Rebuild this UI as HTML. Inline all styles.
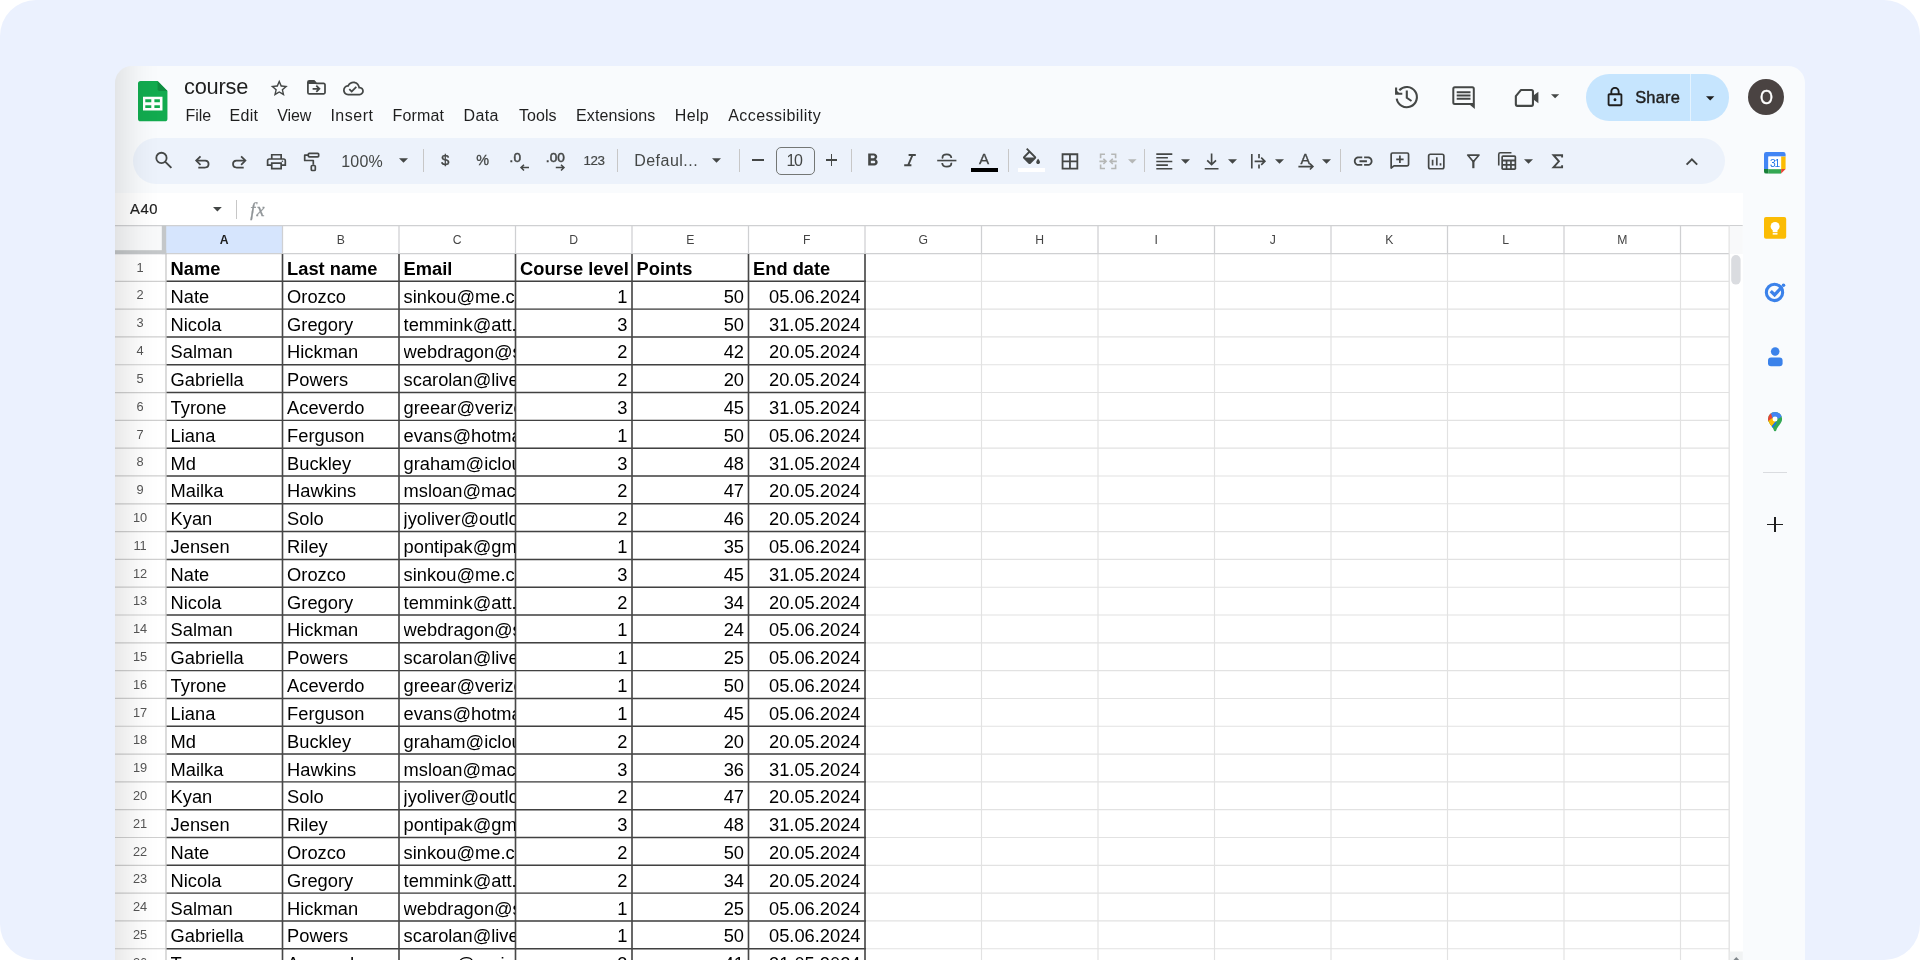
<!DOCTYPE html>
<html lang="en"><head><meta charset="utf-8"><title>course - Google Sheets</title>
<style>
html,body{margin:0;padding:0;background:#fff;}
body{width:1920px;height:960px;overflow:hidden;position:relative;font-family:"Liberation Sans", Arial, sans-serif;color:#1f1f1f;}
.outer{position:absolute;left:0;top:0;width:1920px;height:960px;background:#ebf1fe;border-radius:36px;overflow:hidden;will-change:transform;}
.win{position:absolute;left:115px;top:66px;width:1690px;height:900px;background:#f9fbfd;border-radius:17px 17px 0 0;}
.abs,.outer span,.ic{position:absolute;white-space:nowrap;}
.ic{display:block;overflow:visible;}
.menu span{color:#1f1f1f;}
.tb{position:absolute;left:133px;top:138px;width:1591.5px;height:46px;border-radius:23px;background:#ecf2fb;}
.sep{position:absolute;width:1px;top:149px;height:23px;background:#c7c7c7;}
.g{fill:#444746;}
.sheet{position:absolute;left:115px;top:193px;width:1627.5px;height:767px;background:#fff;overflow:hidden;}
.cells span{color:#000;}
.c{position:absolute;overflow:hidden;white-space:nowrap;color:#000;font-size:18.3px;line-height:28px;height:28px;}
.rn{position:absolute;width:50px;text-align:center;color:#565656;font-size:12.8px;line-height:14px;left:115.1px;}
.ch{position:absolute;width:116.5px;text-align:center;color:#454545;font-size:12.2px;line-height:14px;top:232.6px;}
</style></head>
<body>
<div class="outer">
<div class="win"></div>
<svg class="ic" style="left:138.30px;top:80.50px;" width="29.45" height="40.30" viewBox="0 0 29.450 40.300">
<path d="M2.6 0H19.6L29.45 9.9V37.7a2.600 2.600 0 0 1-2.600 2.600H2.600A2.600 2.600 0 0 1 0 37.700V2.600A2.600 2.600 0 0 1 2.600 0z" fill="#12ab4f"/>
<path d="M19.600 0L29.450 9.900H21.300a1.700 1.700 0 0 1-1.700-1.700z" fill="#0e8d40"/>
<path d="M5 15.850h19.500v13.550H5z M7.300 18.350v2.950h6v-2.950z M16.400 18.350v2.950h5.500v-2.950z M7.300 24.200v2.700h6v-2.700z M16.400 24.200v2.700h5.500v-2.700z" fill="#fff" fill-rule="evenodd"/>
</svg><span style="left:184.10px;top:73.95px;font-size:21.8px;line-height:26px;color:#1f1f1f;letter-spacing:-0.25px;">course</span><svg class="ic" style="left:269.20px;top:77.97px;" width="20.50" height="20.50" viewBox="0 0 24 24"><path class="g" d="M22 9.24l-7.19-.62L12 2 9.19 8.63 2 9.24l5.46 4.73L5.82 21 12 17.27 18.18 21l-1.63-7.03L22 9.24zM12 15.4l-3.76 2.27 1-4.28-3.32-2.88 4.38-.38L12 6.1l1.71 4.04 4.38.38-3.32 2.88 1 4.28L12 15.4z"/></svg><svg class="ic" style="left:343.10px;top:77.60px;" width="20.90" height="20.90" viewBox="0 0 24 24"><path class="g" d="M19.35 10.04C18.67 6.59 15.64 4 12 4 9.11 4 6.6 5.64 5.35 8.04 2.34 8.36 0 10.91 0 14c0 3.31 2.69 6 6 6h13c2.76 0 5-2.24 5-5 0-2.64-2.05-4.78-4.65-4.96zM19 18H6c-2.21 0-4-1.79-4-4 0-2.05 1.53-3.76 3.56-3.97l1.07-.11.5-.95C8.08 7.14 9.94 6 12 6c2.62 0 4.88 1.86 5.39 4.43l.3 1.5 1.53.11c1.56.1 2.78 1.41 2.78 2.96 0 1.65-1.35 3-3 3zm-9-3.82l-2.09-2.09L6.5 13.5 10 17l6.01-6.01-1.41-1.41z"/></svg><div class="menu"><span class="m_File" style="left:185.40px;top:106.36px;font-size:16px;line-height:19px;">File</span><span class="m_Edit" style="left:229.50px;top:106.36px;font-size:16px;line-height:19px;letter-spacing:0.33px;">Edit</span><span class="m_View" style="left:277.30px;top:106.36px;font-size:16px;line-height:19px;letter-spacing:-0.1px;">View</span><span class="m_Insert" style="left:330.40px;top:106.36px;font-size:16px;line-height:19px;letter-spacing:0.5px;">Insert</span><span class="m_Format" style="left:392.60px;top:106.36px;font-size:16px;line-height:19px;letter-spacing:0.12px;">Format</span><span class="m_Data" style="left:463.50px;top:106.36px;font-size:16px;line-height:19px;letter-spacing:0.4px;">Data</span><span class="m_Tools" style="left:519.10px;top:106.36px;font-size:16px;line-height:19px;">Tools</span><span class="m_Extensions" style="left:576.00px;top:106.36px;font-size:16px;line-height:19px;letter-spacing:0.11px;">Extensions</span><span class="m_Help" style="left:674.80px;top:106.36px;font-size:16px;line-height:19px;letter-spacing:0.33px;">Help</span><span class="m_Accessibility" style="left:728.20px;top:106.36px;font-size:16px;line-height:19px;letter-spacing:0.45px;">Accessibility</span></div>
<svg class="ic" style="left:1551.00px;top:94.30px;" width="8.20" height="4.50" viewBox="0 0 10 5"><path class="g" d="M0 0h10L5 5z"/></svg><div class="abs" style="left:1585.5px;top:74.3px;width:143px;height:46.4px;border-radius:23.2px;background:#c6e5fe;"></div><div class="abs" style="left:1689.8px;top:74.3px;width:1.2px;height:46.4px;background:#e4f3ff;"></div><svg class="ic" style="left:1603.80px;top:85.50px;" width="22.00" height="22.00" viewBox="0 0 24 24"><path fill="#1f1f1f" d="M18 8h-1V6c0-2.76-2.24-5-5-5S7 3.240 7 6v2H6c-1.1 0-2 .9-2 2v10c0 1.100.9 2 2 2h12c1.100 0 2-.9 2-2V10c0-1.1-.9-2-2-2zM9 6c0-1.660 1.340-3 3-3s3 1.340 3 3v2H9V6zm9 14H6V10h12v10zm-6-3.400c.880 0 1.600-.720 1.600-1.600s-.720-1.600-1.600-1.600-1.600.720-1.600 1.600.720 1.600 1.600 1.600z"/></svg><span class="share" style="left:1635.20px;top:86.82px;font-size:16.4px;line-height:20px;color:#1f1f1f;-webkit-text-stroke:0.45px #1f1f1f;letter-spacing:0.25px;">Share</span><svg class="ic" style="left:1705.60px;top:95.60px;" width="8.40" height="4.60" viewBox="0 0 10 5"><path fill="#1f1f1f" d="M0 0h10L5 5z"/></svg><div class="abs" style="left:1747.6px;top:78.7px;width:36.8px;height:36.8px;border-radius:50%;background:#4a4342;"></div><span class="av" style="left:1759.50px;top:86.28px;font-size:19.4px;line-height:23px;color:#fff;-webkit-text-stroke:0.35px #fff;transform:scaleX(0.86);transform-origin:0 0;">O</span>
<div class="tb"></div>
<div class="sep" style="left:423.3px"></div><div class="sep" style="left:617px"></div><div class="sep" style="left:738.8px"></div><div class="sep" style="left:850.8px"></div><div class="sep" style="left:1007.8px"></div><div class="sep" style="left:1143.8px"></div><div class="sep" style="left:1340px"></div>
<span class="zoom" style="left:341.30px;top:151.66px;font-size:16px;line-height:19px;color:#444746;letter-spacing:0.15px;">100%</span><svg class="ic" style="left:399.10px;top:158.20px;" width="9.00" height="4.80" viewBox="0 0 10 5"><path fill="#444746" d="M0 0h10L5 5z"/></svg><span class="dollar" style="left:441.20px;top:151.34px;font-size:14.6px;line-height:18px;color:#444746;-webkit-text-stroke:0.4px #444746;">$</span><span class="pct" style="left:476.20px;top:152.11px;font-size:14.4px;line-height:17px;color:#444746;-webkit-text-stroke:0.3px #444746;">%</span><span class="dec0" style="left:509.40px;top:150.19px;font-size:13.6px;line-height:16px;color:#444746;-webkit-text-stroke:0.5px #444746;letter-spacing:0.3px;">.0</span><span class="dec00" style="left:545.80px;top:150.19px;font-size:13.6px;line-height:16px;color:#444746;-webkit-text-stroke:0.5px #444746;letter-spacing:0.1px;">.00</span><span class="n123" style="left:583.40px;top:152.66px;font-size:13.4px;line-height:16px;color:#444746;-webkit-text-stroke:0.2px #444746;letter-spacing:-0.35px;">123</span><span class="deff" style="left:634.20px;top:150.66px;font-size:16px;line-height:19px;color:#444746;letter-spacing:0.48px;">Defaul...</span><svg class="ic" style="left:712.40px;top:158.20px;" width="9.00" height="4.80" viewBox="0 0 10 5"><path fill="#444746" d="M0 0h10L5 5z"/></svg><div class="abs" style="left:752px;top:159.2px;width:11.8px;height:1.7px;background:#444746;"></div><div class="abs" style="left:776px;top:147px;width:37.2px;height:26px;border:1px solid #747775;border-radius:5px;"></div><span class="fs10" style="left:786.40px;top:150.66px;font-size:16px;line-height:19px;color:#444746;letter-spacing:-1.2px;">10</span><div class="abs" style="left:825.6px;top:159.4px;width:11.8px;height:1.7px;background:#444746;"></div><div class="abs" style="left:830.6px;top:154.4px;width:1.7px;height:11.8px;background:#444746;"></div><svg class="ic" style="left:862.30px;top:150.10px;" width="21.20" height="20.60" viewBox="0 0 24 24" preserveAspectRatio="none"><path class="g" d="M15.6 10.790c.970-.670 1.650-1.770 1.650-2.790 0-2.260-1.750-4-4-4H7v14h7.040c2.090 0 3.710-1.700 3.710-3.790 0-1.520-.860-2.820-2.150-3.420zM10 6.500h3c.830 0 1.500.670 1.500 1.500s-.670 1.500-1.500 1.500h-3v-3zm3.500 9H10v-3h3.500c.830 0 1.500.670 1.500 1.500s-.670 1.500-1.500 1.500z"/></svg><span class="tca" style="left:979.10px;top:149.63px;font-size:15.2px;line-height:18px;color:#444746;-webkit-text-stroke:0.3px #444746;">A</span><div class="abs" style="left:971.4px;top:167.9px;width:26.4px;height:3.8px;background:#000;"></div><svg class="ic" style="left:1021.50px;top:147.80px;" width="19.00" height="17.00" viewBox="2 0 20 18"><path class="g" d="M16.560 8.940L7.620 0 6.210 1.410l2.380 2.380-5.150 5.150c-.590.590-.590 1.540 0 2.120l5.500 5.500c.290.290.680.440 1.060.440s.770-.150 1.060-.440l5.500-5.500c.590-.580.590-1.530 0-2.120zM5.210 10L10 5.210 14.790 10H5.210zM19 11.500s-2 2.170-2 3.500c0 1.100.9 2 2 2s2-.9 2-2c0-1.330-2-3.500-2-3.500z"/></svg><div class="abs" style="left:1018.2px;top:167.900px;width:26.8px;height:3.8px;background:#fff;"></div><svg class="ic" style="left:1128.20px;top:158.50px;" width="8.60" height="4.60" viewBox="0 0 10 5"><path fill="#b5b7b6" d="M0 0h10L5 5z"/></svg><svg class="ic" style="left:1181.10px;top:158.50px;" width="9.00" height="4.80" viewBox="0 0 10 5"><path fill="#444746" d="M0 0h10L5 5z"/></svg><svg class="ic" style="left:1227.70px;top:158.50px;" width="9.00" height="4.80" viewBox="0 0 10 5"><path fill="#444746" d="M0 0h10L5 5z"/></svg><svg class="ic" style="left:1274.90px;top:158.50px;" width="9.00" height="4.80" viewBox="0 0 10 5"><path fill="#444746" d="M0 0h10L5 5z"/></svg><span class="rota" style="left:1300.40px;top:150.61px;font-size:14.4px;line-height:17px;color:#444746;-webkit-text-stroke:0.35px #444746;">A</span><svg class="ic" style="left:1322.20px;top:158.50px;" width="9.00" height="4.80" viewBox="0 0 10 5"><path fill="#444746" d="M0 0h10L5 5z"/></svg><svg class="ic" style="left:1351.60px;top:150.00px;" width="22.40" height="22.40" viewBox="0 0 24 24"><path class="g" d="M3.900 12c0-1.710 1.390-3.100 3.100-3.100h4V7H7c-2.760 0-5 2.240-5 5s2.240 5 5 5h4v-1.900H7c-1.710 0-3.100-1.390-3.100-3.100zM8 13h8v-2H8v2zm9-6h-4v1.900h4c1.710 0 3.100 1.390 3.100 3.100s-1.390 3.100-3.100 3.100h-4V17h4c2.760 0 5-2.240 5-5s-2.240-5-5-5z"/></svg><svg class="ic" style="left:1524.00px;top:158.50px;" width="9.00" height="4.80" viewBox="0 0 10 5"><path fill="#444746" d="M0 0h10L5 5z"/></svg>
<div class="sheet"></div>
<span class="namebox" style="left:130.00px;top:199.57px;font-size:14.8px;line-height:18px;color:#1f1f1f;letter-spacing:0.55px;-webkit-text-stroke:0.2px #1f1f1f;">A40</span><svg class="ic" style="left:213.40px;top:207.20px;" width="8.80" height="4.60" viewBox="0 0 10 5"><path fill="#444746" d="M0 0h10L5 5z"/></svg><div class="abs" style="left:236px;top:200px;width:1px;height:19px;background:#c7c7c7;"></div><span class="fx" style="left:250.2px;top:198.4px;font-family:'Liberation Serif',serif;font-style:italic;font-size:18.2px;line-height:24px;color:#8f9497;letter-spacing:1.2px;-webkit-text-stroke:0.3px #8f9497;">fx</span>
<svg class="ic" style="left:0;top:0" width="1920" height="960" viewBox="0 0 1920 960"><rect x="115" y="225.6" width="1627.7" height="27.900000000000006" fill="#fff"/><rect x="115" y="225.6" width="51.0" height="27.900000000000006" fill="#f8f9fa"/><rect x="166.0" y="225.6" width="117.0" height="27.900000000000006" fill="#d6e5fd"/><path d="M166.0 281.30H1729.2 M166.0 309.11H1729.2 M166.0 336.92H1729.2 M166.0 364.73H1729.2 M166.0 392.54H1729.2 M166.0 420.35H1729.2 M166.0 448.16H1729.2 M166.0 475.97H1729.2 M166.0 503.78H1729.2 M166.0 531.59H1729.2 M166.0 559.40H1729.2 M166.0 587.21H1729.2 M166.0 615.02H1729.2 M166.0 642.83H1729.2 M166.0 670.64H1729.2 M166.0 698.45H1729.2 M166.0 726.26H1729.2 M166.0 754.07H1729.2 M166.0 781.88H1729.2 M166.0 809.69H1729.2 M166.0 837.50H1729.2 M166.0 865.31H1729.2 M166.0 893.12H1729.2 M166.0 920.93H1729.2 M166.0 948.74H1729.2 M166.0 976.55H1729.2 M282.50 253.5V960 M399.00 253.5V960 M515.50 253.5V960 M632.00 253.5V960 M748.50 253.5V960 M865.00 253.5V960 M981.50 253.5V960 M1098.00 253.5V960 M1214.50 253.5V960 M1331.00 253.5V960 M1447.50 253.5V960 M1564.00 253.5V960 M1680.50 253.5V960" stroke="#e2e2e2" stroke-width="1.15" fill="none"/><path d="M115 225.6H1742.7 M115 253.5H1729.2 M282.50 225.6V253.5 M399.00 225.6V253.5 M515.50 225.6V253.5 M632.00 225.6V253.5 M748.50 225.6V253.5 M865.00 225.6V253.5 M981.50 225.6V253.5 M1098.00 225.6V253.5 M1214.50 225.6V253.5 M1331.00 225.6V253.5 M1447.50 225.6V253.5 M1564.00 225.6V253.5 M1680.50 225.6V253.5" stroke="#cfd0d2" stroke-width="1.25" fill="none"/><path d="M115 281.30H166.0 M115 309.11H166.0 M115 336.92H166.0 M115 364.73H166.0 M115 392.54H166.0 M115 420.35H166.0 M115 448.16H166.0 M115 475.97H166.0 M115 503.78H166.0 M115 531.59H166.0 M115 559.40H166.0 M115 587.21H166.0 M115 615.02H166.0 M115 642.83H166.0 M115 670.64H166.0 M115 698.45H166.0 M115 726.26H166.0 M115 754.07H166.0 M115 781.88H166.0 M115 809.69H166.0 M115 837.50H166.0 M115 865.31H166.0 M115 893.12H166.0 M115 920.93H166.0 M115 948.74H166.0 M115 976.55H166.0" stroke="#cfcfcf" stroke-width="1.2" fill="none"/><path d="M166.0 253.5V960" stroke="#c4c4c4" stroke-width="1.2" fill="none"/><path d="M1729.2 225.6V960" stroke="#e1e1e1" stroke-width="1.3" fill="none"/><rect x="1729.8" y="226.2" width="13" height="27.900000000000006" fill="#f8f9fa"/><rect x="1731.2" y="255" width="9.4" height="29.6" rx="4.7" fill="#dadce0"/><rect x="1729.8" y="951.5" width="13" height="9" fill="#f1f3f4"/><path d="M1733.5 960l2.800-3 2.800 3z" fill="#80868b"/><path d="M166.6 281.30H865.90 M166.6 309.11H865.90 M166.6 336.92H865.90 M166.6 364.73H865.90 M166.6 392.54H865.90 M166.6 420.35H865.90 M166.6 448.16H865.90 M166.6 475.97H865.90 M166.6 503.78H865.90 M166.6 531.59H865.90 M166.6 559.40H865.90 M166.6 587.21H865.90 M166.6 615.02H865.90 M166.6 642.83H865.90 M166.6 670.64H865.90 M166.6 698.45H865.90 M166.6 726.26H865.90 M166.6 754.07H865.90 M166.6 781.88H865.90 M166.6 809.69H865.90 M166.6 837.50H865.90 M166.6 865.31H865.90 M166.6 893.12H865.90 M166.6 920.93H865.90 M166.6 948.74H865.90 M166.6 976.55H865.90" stroke="#414141" stroke-width="1.45" fill="none"/><path d="M282.50 254.1V960 M399.00 254.1V960 M515.50 254.1V960 M632.00 254.1V960 M748.50 254.1V960 M865.00 254.1V960" stroke="#474747" stroke-width="1.6" fill="none"/><rect x="161.8" y="225.6" width="4.4" height="28.500000000000007" fill="#c4c7c9"/><rect x="115" y="250.2" width="51.2" height="3.9" fill="#c4c7c9"/></svg>
<div class="ch" style="left:166.00px;font-weight:bold;color:#1f1f1f;">A</div><div class="ch" style="left:282.50px;">B</div><div class="ch" style="left:399.00px;">C</div><div class="ch" style="left:515.50px;">D</div><div class="ch" style="left:632.00px;">E</div><div class="ch" style="left:748.50px;">F</div><div class="ch" style="left:865.00px;">G</div><div class="ch" style="left:981.50px;">H</div><div class="ch" style="left:1098.00px;">I</div><div class="ch" style="left:1214.50px;">J</div><div class="ch" style="left:1331.00px;">K</div><div class="ch" style="left:1447.50px;">L</div><div class="ch" style="left:1564.00px;">M</div>
<div class="cells">
<div class="rn" style="top:260.64px">1</div><div class="c" style="top:254.96px;left:170.60px;width:111.00px;font-weight:bold;">Name</div><div class="c" style="top:254.96px;left:287.10px;width:111.00px;font-weight:bold;">Last name</div><div class="c" style="top:254.96px;left:403.60px;width:111.00px;font-weight:bold;">Email</div><div class="c" style="top:254.96px;left:520.10px;width:111.00px;font-weight:bold;">Course level</div><div class="c" style="top:254.96px;left:636.60px;width:111.00px;font-weight:bold;">Points</div><div class="c" style="top:254.96px;left:753.10px;width:111.00px;font-weight:bold;">End date</div>
<div class="rn" style="top:288.45px">2</div><div class="c" style="top:282.77px;left:170.60px;width:111.00px;">Nate</div><div class="c" style="top:282.77px;left:287.10px;width:111.00px;">Orozco</div><div class="c" style="top:282.77px;left:403.60px;width:111.00px;">sinkou@me.com</div><div class="c" style="top:282.77px;left:515.50px;width:112.00px;text-align:right;">1</div><div class="c" style="top:282.77px;left:632.00px;width:112.00px;text-align:right;">50</div><div class="c" style="top:282.77px;left:748.50px;width:112.00px;text-align:right;">05.06.2024</div>
<div class="rn" style="top:316.26px">3</div><div class="c" style="top:310.58px;left:170.60px;width:111.00px;">Nicola</div><div class="c" style="top:310.58px;left:287.10px;width:111.00px;">Gregory</div><div class="c" style="top:310.58px;left:403.60px;width:111.00px;">temmink@att.net</div><div class="c" style="top:310.58px;left:515.50px;width:112.00px;text-align:right;">3</div><div class="c" style="top:310.58px;left:632.00px;width:112.00px;text-align:right;">50</div><div class="c" style="top:310.58px;left:748.50px;width:112.00px;text-align:right;">31.05.2024</div>
<div class="rn" style="top:344.07px">4</div><div class="c" style="top:338.39px;left:170.60px;width:111.00px;">Salman</div><div class="c" style="top:338.39px;left:287.10px;width:111.00px;">Hickman</div><div class="c" style="top:338.39px;left:403.60px;width:111.00px;">webdragon@sbcglobal.net</div><div class="c" style="top:338.39px;left:515.50px;width:112.00px;text-align:right;">2</div><div class="c" style="top:338.39px;left:632.00px;width:112.00px;text-align:right;">42</div><div class="c" style="top:338.39px;left:748.50px;width:112.00px;text-align:right;">20.05.2024</div>
<div class="rn" style="top:371.88px">5</div><div class="c" style="top:366.20px;left:170.60px;width:111.00px;">Gabriella</div><div class="c" style="top:366.20px;left:287.10px;width:111.00px;">Powers</div><div class="c" style="top:366.20px;left:403.60px;width:111.00px;">scarolan@live.com</div><div class="c" style="top:366.20px;left:515.50px;width:112.00px;text-align:right;">2</div><div class="c" style="top:366.20px;left:632.00px;width:112.00px;text-align:right;">20</div><div class="c" style="top:366.20px;left:748.50px;width:112.00px;text-align:right;">20.05.2024</div>
<div class="rn" style="top:399.69px">6</div><div class="c" style="top:394.01px;left:170.60px;width:111.00px;">Tyrone</div><div class="c" style="top:394.01px;left:287.10px;width:111.00px;">Aceverdo</div><div class="c" style="top:394.01px;left:403.60px;width:111.00px;">greear@verizon.net</div><div class="c" style="top:394.01px;left:515.50px;width:112.00px;text-align:right;">3</div><div class="c" style="top:394.01px;left:632.00px;width:112.00px;text-align:right;">45</div><div class="c" style="top:394.01px;left:748.50px;width:112.00px;text-align:right;">31.05.2024</div>
<div class="rn" style="top:427.50px">7</div><div class="c" style="top:421.82px;left:170.60px;width:111.00px;">Liana</div><div class="c" style="top:421.82px;left:287.10px;width:111.00px;">Ferguson</div><div class="c" style="top:421.82px;left:403.60px;width:111.00px;">evans@hotmail.com</div><div class="c" style="top:421.82px;left:515.50px;width:112.00px;text-align:right;">1</div><div class="c" style="top:421.82px;left:632.00px;width:112.00px;text-align:right;">50</div><div class="c" style="top:421.82px;left:748.50px;width:112.00px;text-align:right;">05.06.2024</div>
<div class="rn" style="top:455.31px">8</div><div class="c" style="top:449.63px;left:170.60px;width:111.00px;">Md</div><div class="c" style="top:449.63px;left:287.10px;width:111.00px;">Buckley</div><div class="c" style="top:449.63px;left:403.60px;width:111.00px;">graham@icloud.com</div><div class="c" style="top:449.63px;left:515.50px;width:112.00px;text-align:right;">3</div><div class="c" style="top:449.63px;left:632.00px;width:112.00px;text-align:right;">48</div><div class="c" style="top:449.63px;left:748.50px;width:112.00px;text-align:right;">31.05.2024</div>
<div class="rn" style="top:483.12px">9</div><div class="c" style="top:477.44px;left:170.60px;width:111.00px;">Mailka</div><div class="c" style="top:477.44px;left:287.10px;width:111.00px;">Hawkins</div><div class="c" style="top:477.44px;left:403.60px;width:111.00px;">msloan@mac.com</div><div class="c" style="top:477.44px;left:515.50px;width:112.00px;text-align:right;">2</div><div class="c" style="top:477.44px;left:632.00px;width:112.00px;text-align:right;">47</div><div class="c" style="top:477.44px;left:748.50px;width:112.00px;text-align:right;">20.05.2024</div>
<div class="rn" style="top:510.94px">10</div><div class="c" style="top:505.25px;left:170.60px;width:111.00px;">Kyan</div><div class="c" style="top:505.25px;left:287.10px;width:111.00px;">Solo</div><div class="c" style="top:505.25px;left:403.60px;width:111.00px;">jyoliver@outlook.com</div><div class="c" style="top:505.25px;left:515.50px;width:112.00px;text-align:right;">2</div><div class="c" style="top:505.25px;left:632.00px;width:112.00px;text-align:right;">46</div><div class="c" style="top:505.25px;left:748.50px;width:112.00px;text-align:right;">20.05.2024</div>
<div class="rn" style="top:538.75px">11</div><div class="c" style="top:533.06px;left:170.60px;width:111.00px;">Jensen</div><div class="c" style="top:533.06px;left:287.10px;width:111.00px;">Riley</div><div class="c" style="top:533.06px;left:403.60px;width:111.00px;">pontipak@gmail.com</div><div class="c" style="top:533.06px;left:515.50px;width:112.00px;text-align:right;">1</div><div class="c" style="top:533.06px;left:632.00px;width:112.00px;text-align:right;">35</div><div class="c" style="top:533.06px;left:748.50px;width:112.00px;text-align:right;">05.06.2024</div>
<div class="rn" style="top:566.56px">12</div><div class="c" style="top:560.87px;left:170.60px;width:111.00px;">Nate</div><div class="c" style="top:560.87px;left:287.10px;width:111.00px;">Orozco</div><div class="c" style="top:560.87px;left:403.60px;width:111.00px;">sinkou@me.com</div><div class="c" style="top:560.87px;left:515.50px;width:112.00px;text-align:right;">3</div><div class="c" style="top:560.87px;left:632.00px;width:112.00px;text-align:right;">45</div><div class="c" style="top:560.87px;left:748.50px;width:112.00px;text-align:right;">31.05.2024</div>
<div class="rn" style="top:594.37px">13</div><div class="c" style="top:588.68px;left:170.60px;width:111.00px;">Nicola</div><div class="c" style="top:588.68px;left:287.10px;width:111.00px;">Gregory</div><div class="c" style="top:588.68px;left:403.60px;width:111.00px;">temmink@att.net</div><div class="c" style="top:588.68px;left:515.50px;width:112.00px;text-align:right;">2</div><div class="c" style="top:588.68px;left:632.00px;width:112.00px;text-align:right;">34</div><div class="c" style="top:588.68px;left:748.50px;width:112.00px;text-align:right;">20.05.2024</div>
<div class="rn" style="top:622.17px">14</div><div class="c" style="top:616.49px;left:170.60px;width:111.00px;">Salman</div><div class="c" style="top:616.49px;left:287.10px;width:111.00px;">Hickman</div><div class="c" style="top:616.49px;left:403.60px;width:111.00px;">webdragon@sbcglobal.net</div><div class="c" style="top:616.49px;left:515.50px;width:112.00px;text-align:right;">1</div><div class="c" style="top:616.49px;left:632.00px;width:112.00px;text-align:right;">24</div><div class="c" style="top:616.49px;left:748.50px;width:112.00px;text-align:right;">05.06.2024</div>
<div class="rn" style="top:649.99px">15</div><div class="c" style="top:644.30px;left:170.60px;width:111.00px;">Gabriella</div><div class="c" style="top:644.30px;left:287.10px;width:111.00px;">Powers</div><div class="c" style="top:644.30px;left:403.60px;width:111.00px;">scarolan@live.com</div><div class="c" style="top:644.30px;left:515.50px;width:112.00px;text-align:right;">1</div><div class="c" style="top:644.30px;left:632.00px;width:112.00px;text-align:right;">25</div><div class="c" style="top:644.30px;left:748.50px;width:112.00px;text-align:right;">05.06.2024</div>
<div class="rn" style="top:677.80px">16</div><div class="c" style="top:672.11px;left:170.60px;width:111.00px;">Tyrone</div><div class="c" style="top:672.11px;left:287.10px;width:111.00px;">Aceverdo</div><div class="c" style="top:672.11px;left:403.60px;width:111.00px;">greear@verizon.net</div><div class="c" style="top:672.11px;left:515.50px;width:112.00px;text-align:right;">1</div><div class="c" style="top:672.11px;left:632.00px;width:112.00px;text-align:right;">50</div><div class="c" style="top:672.11px;left:748.50px;width:112.00px;text-align:right;">05.06.2024</div>
<div class="rn" style="top:705.61px">17</div><div class="c" style="top:699.92px;left:170.60px;width:111.00px;">Liana</div><div class="c" style="top:699.92px;left:287.10px;width:111.00px;">Ferguson</div><div class="c" style="top:699.92px;left:403.60px;width:111.00px;">evans@hotmail.com</div><div class="c" style="top:699.92px;left:515.50px;width:112.00px;text-align:right;">1</div><div class="c" style="top:699.92px;left:632.00px;width:112.00px;text-align:right;">45</div><div class="c" style="top:699.92px;left:748.50px;width:112.00px;text-align:right;">05.06.2024</div>
<div class="rn" style="top:733.41px">18</div><div class="c" style="top:727.73px;left:170.60px;width:111.00px;">Md</div><div class="c" style="top:727.73px;left:287.10px;width:111.00px;">Buckley</div><div class="c" style="top:727.73px;left:403.60px;width:111.00px;">graham@icloud.com</div><div class="c" style="top:727.73px;left:515.50px;width:112.00px;text-align:right;">2</div><div class="c" style="top:727.73px;left:632.00px;width:112.00px;text-align:right;">20</div><div class="c" style="top:727.73px;left:748.50px;width:112.00px;text-align:right;">20.05.2024</div>
<div class="rn" style="top:761.23px">19</div><div class="c" style="top:755.54px;left:170.60px;width:111.00px;">Mailka</div><div class="c" style="top:755.54px;left:287.10px;width:111.00px;">Hawkins</div><div class="c" style="top:755.54px;left:403.60px;width:111.00px;">msloan@mac.com</div><div class="c" style="top:755.54px;left:515.50px;width:112.00px;text-align:right;">3</div><div class="c" style="top:755.54px;left:632.00px;width:112.00px;text-align:right;">36</div><div class="c" style="top:755.54px;left:748.50px;width:112.00px;text-align:right;">31.05.2024</div>
<div class="rn" style="top:789.04px">20</div><div class="c" style="top:783.35px;left:170.60px;width:111.00px;">Kyan</div><div class="c" style="top:783.35px;left:287.10px;width:111.00px;">Solo</div><div class="c" style="top:783.35px;left:403.60px;width:111.00px;">jyoliver@outlook.com</div><div class="c" style="top:783.35px;left:515.50px;width:112.00px;text-align:right;">2</div><div class="c" style="top:783.35px;left:632.00px;width:112.00px;text-align:right;">47</div><div class="c" style="top:783.35px;left:748.50px;width:112.00px;text-align:right;">20.05.2024</div>
<div class="rn" style="top:816.85px">21</div><div class="c" style="top:811.16px;left:170.60px;width:111.00px;">Jensen</div><div class="c" style="top:811.16px;left:287.10px;width:111.00px;">Riley</div><div class="c" style="top:811.16px;left:403.60px;width:111.00px;">pontipak@gmail.com</div><div class="c" style="top:811.16px;left:515.50px;width:112.00px;text-align:right;">3</div><div class="c" style="top:811.16px;left:632.00px;width:112.00px;text-align:right;">48</div><div class="c" style="top:811.16px;left:748.50px;width:112.00px;text-align:right;">31.05.2024</div>
<div class="rn" style="top:844.65px">22</div><div class="c" style="top:838.97px;left:170.60px;width:111.00px;">Nate</div><div class="c" style="top:838.97px;left:287.10px;width:111.00px;">Orozco</div><div class="c" style="top:838.97px;left:403.60px;width:111.00px;">sinkou@me.com</div><div class="c" style="top:838.97px;left:515.50px;width:112.00px;text-align:right;">2</div><div class="c" style="top:838.97px;left:632.00px;width:112.00px;text-align:right;">50</div><div class="c" style="top:838.97px;left:748.50px;width:112.00px;text-align:right;">20.05.2024</div>
<div class="rn" style="top:872.46px">23</div><div class="c" style="top:866.78px;left:170.60px;width:111.00px;">Nicola</div><div class="c" style="top:866.78px;left:287.10px;width:111.00px;">Gregory</div><div class="c" style="top:866.78px;left:403.60px;width:111.00px;">temmink@att.net</div><div class="c" style="top:866.78px;left:515.50px;width:112.00px;text-align:right;">2</div><div class="c" style="top:866.78px;left:632.00px;width:112.00px;text-align:right;">34</div><div class="c" style="top:866.78px;left:748.50px;width:112.00px;text-align:right;">20.05.2024</div>
<div class="rn" style="top:900.28px">24</div><div class="c" style="top:894.59px;left:170.60px;width:111.00px;">Salman</div><div class="c" style="top:894.59px;left:287.10px;width:111.00px;">Hickman</div><div class="c" style="top:894.59px;left:403.60px;width:111.00px;">webdragon@sbcglobal.net</div><div class="c" style="top:894.59px;left:515.50px;width:112.00px;text-align:right;">1</div><div class="c" style="top:894.59px;left:632.00px;width:112.00px;text-align:right;">25</div><div class="c" style="top:894.59px;left:748.50px;width:112.00px;text-align:right;">05.06.2024</div>
<div class="rn" style="top:928.09px">25</div><div class="c" style="top:922.40px;left:170.60px;width:111.00px;">Gabriella</div><div class="c" style="top:922.40px;left:287.10px;width:111.00px;">Powers</div><div class="c" style="top:922.40px;left:403.60px;width:111.00px;">scarolan@live.com</div><div class="c" style="top:922.40px;left:515.50px;width:112.00px;text-align:right;">1</div><div class="c" style="top:922.40px;left:632.00px;width:112.00px;text-align:right;">50</div><div class="c" style="top:922.40px;left:748.50px;width:112.00px;text-align:right;">05.06.2024</div>
<div class="rn" style="top:955.89px">26</div><div class="c" style="top:950.21px;left:170.60px;width:111.00px;">Tyrone</div><div class="c" style="top:950.21px;left:287.10px;width:111.00px;">Aceverdo</div><div class="c" style="top:950.21px;left:403.60px;width:111.00px;">greear@verizon.net</div><div class="c" style="top:950.21px;left:515.50px;width:112.00px;text-align:right;">3</div><div class="c" style="top:950.21px;left:632.00px;width:112.00px;text-align:right;">41</div><div class="c" style="top:950.21px;left:748.50px;width:112.00px;text-align:right;">31.05.2024</div>
</div>
<div class="abs" style="left:115px;top:66px;width:50px;height:900px;border-radius:17px 0 0 0;overflow:hidden;"><div class="abs" style="left:0;top:0;width:44px;height:900px;background:linear-gradient(90deg,rgba(0,0,0,0.085),rgba(0,0,0,0.072) 12%,rgba(0,0,0,0.048) 33%,rgba(0,0,0,0.022) 55%,rgba(0,0,0,0.008) 80%,rgba(0,0,0,0));"></div></div>
<svg class="ic" style="left:1763.70px;top:151.80px;" width="21.60" height="21.60" viewBox="0 0 21.600 21.600">
<path d="M2.200 0h17.200a2.200 2.200 0 0 1 2.200 2.200v2.400H4.400v12.500H0V2.200A2.200 2.200 0 0 1 2.200 0z" fill="#4285f4"/>
<rect x="17.100" y="4.600" width="4.500" height="12.500" fill="#fbbc04"/>
<rect x="4.400" y="17.100" width="12.700" height="4.500" fill="#34a853"/>
<path d="M0 17.100h4.400v4.500H2.200A2.200 2.200 0 0 1 0 19.400z" fill="#188038"/>
<path d="M17.100 17.100h4.500l-4.500 4.500z" fill="#ea4335"/>
<rect x="4.400" y="4.600" width="12.700" height="12.500" fill="#fff"/>
<text x="10.600" y="15.100" font-family="Liberation Sans, Arial, sans-serif" font-size="10.200" fill="#1a73e8" text-anchor="middle" letter-spacing="-1.100">31</text>
</svg><svg class="ic" style="left:1763.60px;top:217.00px;" width="22.20" height="21.80" viewBox="0 0 22.200 21.800">
<rect x="0" y="0" width="22.200" height="21.800" rx="2" fill="#fbbc04"/>
<circle cx="11.100" cy="9.400" r="4.500" fill="#fff"/>
<rect x="8.700" y="12.600" width="4.800" height="2.600" fill="#fff"/>
<rect x="8.700" y="16.100" width="4.800" height="1.500" fill="#fff"/>
</svg><svg class="ic" style="left:1767.70px;top:346.60px;" width="14.60" height="19.40" viewBox="0 0 14.600 19.400">
<circle cx="7.200" cy="4.500" r="4.300" fill="#3b82ea"/>
<rect x="0" y="10.400" width="14.600" height="8.900" rx="3" fill="#3b82ea"/>
</svg><svg class="ic" style="left:1767.75px;top:411.70px;" width="14.20" height="19.40" viewBox="0 0 14.200 19.400">
<defs><clipPath id="pin"><path d="M7.100 0a7.100 7.100 0 0 1 7.100 7.100c0 4.100-4.200 6.500-6 11.300-.3.800-.6 1-1.100 1s-.8-.2-1.100-1C4.200 13.600 0 11.200 0 7.100A7.100 7.100 0 0 1 7.100 0z"/></clipPath></defs>
<g clip-path="url(#pin)">
<rect x="0" y="0" width="14.200" height="19.400" fill="#34a853"/>
<path d="M0 8.500L4.300 5.800l3.300 3.800-4.700 5.600L0 13z" fill="#fbbc04"/>
<path d="M0 0h3.200l1.600 5.400L0 9.300z" fill="#ea4335"/>
<path d="M2.600 0h11.600v4.300l-3.900 2.500-3.200-2.400-2.700 1.700z" fill="#4285f4"/>
<path d="M2.900 15.200l4.700-5.600 1.100 1.200-4.300 5.600z" fill="#1a73e8"/>
</g>
<circle cx="7.100" cy="7.100" r="2.500" fill="#fff"/>
</svg><div class="abs" style="left:1762.5px;top:472px;width:24px;height:1.2px;background:#dadce0;"></div><div class="abs" style="left:1767px;top:523.6px;width:15.6px;height:1.7px;background:#1f1f1f;"></div><div class="abs" style="left:1773.95px;top:516.6px;width:1.7px;height:15.6px;background:#1f1f1f;"></div><svg class="ic" style="left:0;top:0" width="1920" height="960" viewBox="0 0 1920 960"><path d="M307.9 82.3a1.4 1.4 0 0 1 1.400-1.400h4.700l2.300 2.500h7.300a1.400 1.400 0 0 1 1.400 1.400v7.700a1.400 1.400 0 0 1-1.400 1.400h-14.300a1.400 1.400 0 0 1-1.400-1.400z" fill="none" stroke="#444746" stroke-width="1.750"/><path d="M307.9 83.900v-1.600a1.400 1.400 0 0 1 1.400-1.400h4.700l2.300 2.500v.5z" fill="#444746"/><path d="M312.600 88.800h6M316.300 85.700l3.100 3.100-3.100 3.100" fill="none" stroke="#444746" stroke-width="1.750"/><path d="M1396.700 98.600A10.150 10.150 0 1 0 1399.300 90.200" fill="none" stroke="#444746" stroke-width="2.100"/><path d="M1396.100 87.600v6.200h6.200" fill="none" stroke="#444746" stroke-width="2.100"/><path d="M1396.100 93.800v-3.800l3.800 3.800z" fill="#444746"/><path d="M1406.800 90.600v7.200l4.700 3.200" fill="none" stroke="#444746" stroke-width="2.100"/><path d="M1453.300 88.750a1.500 1.500 0 0 1 1.500-1.500h17.500a1.500 1.500 0 0 1 1.500 1.500v15.250h-19a1.500 1.500 0 0 1-1.500-1.500z" fill="none" stroke="#444746" stroke-width="2"/><path d="M1469.800 104.800h5v4.200z" fill="#444746"/><path d="M1456.700 92.300h13.800M1456.700 95.500h13.800M1456.700 98.700h13.800" fill="none" stroke="#444746" stroke-width="1.900"/><path d="M1515.850 96.200l5.200-6.250h10.400a1.500 1.500 0 0 1 1.500 1.500v12.900a1.500 1.500 0 0 1-1.500 1.500h-14.100a1.500 1.500 0 0 1-1.500-1.500z" fill="none" stroke="#444746" stroke-width="2.100" stroke-linejoin="round"/><path d="M1533.400 95.600l5-3.900v11.600l-5-3.900z" fill="#444746"/><circle cx="161.450" cy="157.900" r="5.150" fill="none" stroke="#444746" stroke-width="1.800"/><path d="M165.100 161.600l6.300 6.300" fill="none" stroke="#444746" stroke-width="1.900"/><path d="M200.500 156.300l-4.300 4.250 4.300 4.250" fill="none" stroke="#444746" stroke-width="1.750"/><path d="M196.600 160.550h8.700a3.480 3.480 0 0 1 0 6.950h-7" fill="none" stroke="#444746" stroke-width="1.750"/><path d="M241.100 156.300l4.300 4.250-4.300 4.250" fill="none" stroke="#444746" stroke-width="1.750"/><path d="M245 160.550h-8.700a3.480 3.480 0 0 0 0 6.950h7.400" fill="none" stroke="#444746" stroke-width="1.750"/><path d="M271.750 159v-4.250h9.400v4.250" fill="none" stroke="#444746" stroke-width="1.700"/><path d="M271.300 165.100h-3.700v-4.300a1.800 1.800 0 0 1 1.800-1.800h14.100a1.800 1.800 0 0 1 1.800 1.800v4.300h-3.700" fill="none" stroke="#444746" stroke-width="1.700"/><path d="M271.750 163.200h9.400v5.350h-9.400z" fill="none" stroke="#444746" stroke-width="1.700"/><circle cx="282.400" cy="161.300" r="0.800" fill="#444746"/><rect x="308.350" y="153.350" width="10.300" height="3.600" rx="0.900" fill="none" stroke="#444746" stroke-width="1.700"/><path d="M308.350 155.150h-3.650v5.350h8.600v4.200" fill="none" stroke="#444746" stroke-width="1.700" stroke-linejoin="round"/><rect x="311.300" y="165.500" width="4" height="5" rx="1" fill="none" stroke="#444746" stroke-width="1.700"/><path d="M529 167.600h-8.200M524 164.700l-3 2.900 3 2.900" fill="none" stroke="#444746" stroke-width="1.500"/><path d="M555.800 167.600h8.200M561 164.700l3 2.900-3 2.900" fill="none" stroke="#444746" stroke-width="1.500"/><path d="M908.600 155h7.200M904.200 165.200h7.200M912.500 155l-4.300 10.200" fill="none" stroke="#444746" stroke-width="1.900"/><path d="M937.200 160.550h19.200" fill="none" stroke="#444746" stroke-width="1.600"/><path d="M951.300 158c-.1-2.300-1.900-3.700-4.500-3.700-2.600 0-4.300 1.300-4.300 3.100 0 .4.100.8.300 1.100" fill="none" stroke="#444746" stroke-width="1.800"/><path d="M942.200 163c.2 2.400 2 3.700 4.700 3.700 2.700 0 4.400-1.200 4.400-3.100 0-.3 0-.5-.1-.8" fill="none" stroke="#444746" stroke-width="1.800"/><path d="M1062.550 154.250h14.800v14.300h-14.800zM1069.950 154.250v14.300M1062.550 161.400h14.800" fill="none" stroke="#444746" stroke-width="1.800"/><path d="M1100.600 158.300v-4.050h4.400M1111.200 154.250h4.400v4.050M1100.600 164.400v4.150h4.400M1111.200 168.550h4.400v-4.150" fill="none" stroke="#b5b7b6" stroke-width="1.600"/><path d="M1099.400 161.350h6.300M1103.400 158.700l2.700 2.650-2.700 2.650M1116.800 161.350h-6.300M1112.800 158.700l-2.700 2.650 2.700 2.650" fill="none" stroke="#b5b7b6" stroke-width="1.600"/><path d="M1156.300 154.100h16M1156.300 157.800h11.600M1156.300 161.500h16M1156.300 165.100h11.600M1156.300 168.700h16" fill="none" stroke="#444746" stroke-width="1.600"/><path d="M1211.600 153.400v10.800M1207.200 160.300l4.400 4.400 4.400-4.400M1204.700 168.700h13.800" fill="none" stroke="#444746" stroke-width="1.650"/><path d="M1251.800 154.100v14.300M1259 154.100v4.200M1259 164.400v4M1254.600 161.300h10M1261.200 157.700l3.700 3.600-3.700 3.600" fill="none" stroke="#444746" stroke-width="1.650"/><path d="M1298.400 166.600h14M1309.900 163.700l3 2.900-3 2.900" fill="none" stroke="#444746" stroke-width="1.600"/><path d="M1391.150 168v-13.700a1.300 1.300 0 0 1 1.300-1.300h14.800a1.300 1.300 0 0 1 1.300 1.300v10.300a1.300 1.300 0 0 1-1.300 1.300h-13.300z" fill="none" stroke="#444746" stroke-width="1.700" stroke-linejoin="round"/><path d="M1399.900 155.600v7.400M1396.200 159.300h7.400" fill="none" stroke="#444746" stroke-width="1.700"/><rect x="1428.650" y="154.250" width="15.200" height="14.500" rx="1.700" fill="none" stroke="#444746" stroke-width="1.700"/><path d="M1432.600 159.700v5.700M1436.800 157.200v8.200M1440.500 163.200v2.200" fill="none" stroke="#444746" stroke-width="1.700"/><path d="M1467.700 155.050h11.300l-5.650 6.700z" fill="none" stroke="#444746" stroke-width="1.700" stroke-linejoin="round"/><path d="M1473.350 161v7.200" fill="none" stroke="#444746" stroke-width="2.200"/><path d="M1498.750 165.600v-11.200a1.600 1.600 0 0 1 1.600-1.600h11.100" fill="none" stroke="#444746" stroke-width="1.600"/><rect x="1501.300" y="155.300" width="14.900" height="14.700" rx="1.700" fill="#444746"/><path d="M1503 157.100h11.500v2.400h-11.500zM1503 161.500h2.700v2.500h-2.700zM1507.400 161.500h2.700v2.500h-2.700zM1511.800 161.500h2.700v2.500h-2.700zM1503 165.700h2.700v2.500h-2.700zM1507.400 165.700h2.700v2.500h-2.700zM1511.800 165.700h2.700v2.500h-2.700z" fill="#ecf2fb"/><path d="M1562.100 157.400v-2.200h-8.600l5.400 6.100-5.400 6.100h8.600v-2.200" fill="none" stroke="#444746" stroke-width="1.900" stroke-linejoin="miter"/><path d="M1686.600 164.600l5.300-5.200 5.300 5.200" fill="none" stroke="#444746" stroke-width="2"/><circle cx="1774.500" cy="292.450" r="8.150" fill="none" stroke="#3b82ea" stroke-width="3.100"/><path d="M1770.700 291.100l3.900 3.700 7.600-8.100" fill="none" stroke="#3b82ea" stroke-width="3.300"/><circle cx="1783.500" cy="285.300" r="1.800" fill="#3b82ea"/></svg>

</div>
</body></html>
